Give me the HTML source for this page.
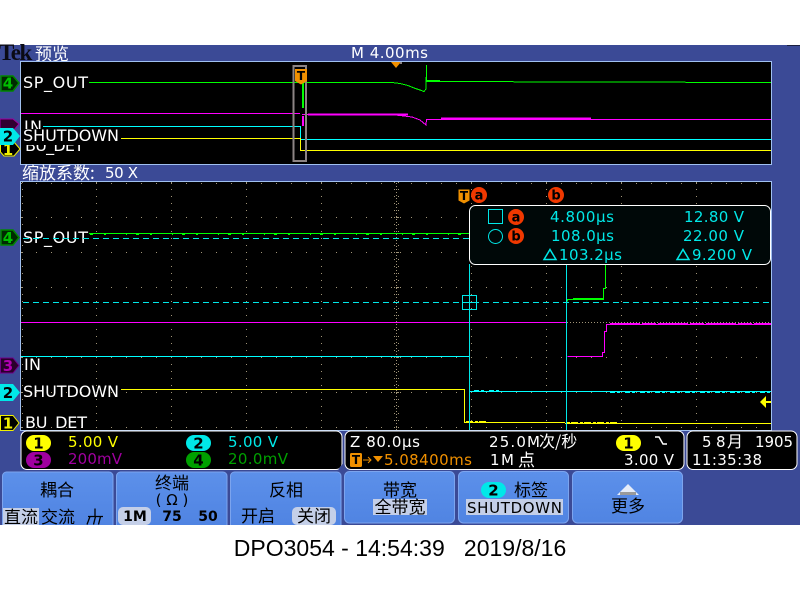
<!DOCTYPE html>
<html lang="zh">
<head>
<meta charset="utf-8">
<title>DPO3054</title>
<style>
html,body{margin:0;padding:0;background:#fff;width:800px;height:600px;overflow:hidden}
svg{display:block}
text{font-family:"DejaVu Sans","Liberation Sans","Noto Sans CJK SC",sans-serif;font-size:15px}
.cjk{font-family:"Noto Sans CJK SC","WenQuanYi Zen Hei",sans-serif}
.lb{fill:#fff;font-size:16px}
.cy{fill:#00e8e8;font-size:15px}
.w{fill:#fff;font-size:15px}
.k{fill:#000;font-size:15px}
.kc{fill:#000;font-family:"Noto Sans CJK SC","WenQuanYi Zen Hei",sans-serif;text-anchor:middle}
.tag{font-size:15px;font-weight:bold;text-anchor:middle}
.crisp,.crisp *{shape-rendering:crispEdges}
</style>
</head>
<body>
<svg xmlns="http://www.w3.org/2000/svg" width="800" height="600" viewBox="0 0 800 600">
<defs>
<linearGradient id="btn" x1="0" y1="0" x2="0" y2="1"><stop offset="0" stop-color="#5c90ea"/><stop offset="1" stop-color="#5084e2"/></linearGradient>
<clipPath id="ov"><rect x="21" y="62" width="750" height="102"/></clipPath>
</defs>

<!-- background -->
<rect width="800" height="600" fill="#fff"/>
<rect x="0" y="45" width="800" height="480" fill="#3b4a96"/>
<rect x="787" y="45" width="13" height="1" fill="#1a1f40"/>

<!-- header -->
<text x="-1" y="60" style="font-family:'Liberation Serif',serif;font-size:23px;font-weight:bold;fill:#0a0a14;letter-spacing:-1.5px">Tek</text>
<text x="35" y="60" class="cjk" style="font-size:17px;fill:#fff">预览</text>
<text x="351" y="58" class="w" textLength="77" lengthAdjust="spacing">M 4.00ms</text>

<!-- overview box -->
<rect class="crisp" x="20.5" y="61.5" width="751" height="103" fill="#000" stroke="#a0c0f0"/>
<g class="crisp" clip-path="url(#ov)" fill="none" stroke-width="1">
<polyline stroke="#00ff00" points="89,82.5 392,82.5 400,83.5 408,85.5 414,88 420,90 424,91.5 426,89 426.5,65 426.5,81.5 771,82.5"/>
<path stroke="#00ff00" stroke-width="2" d="M427 81h13M303 83v25"/>
<polyline stroke="#ff00ff" points="21,113.5 300,113.5"/>
<polyline stroke="#ff00ff" points="302,114.5 390,114.5 400,115.5 412,117 420,120 426,125 426.5,119.5 771,119.5"/>
<path stroke="#ff00ff" stroke-width="2" d="M303 116v10M308 114.5h100M441 118.5h150"/>
<polyline stroke="#00ffff" points="43,126.5 300.5,126.5 300.5,139.5 771,139.5"/>
<polyline stroke="#ffff00" points="121,138.5 300.5,138.5 300.5,150.5 771,150.5"/>
</g>
<path class="crisp" d="M306 84V66H293.500V161H306V84" fill="none" stroke="#8c8484" stroke-width="2"/>
<path d="M295 69h12v12l-6 3.500l-6-3.500z" fill="#f09000"/>
<text x="301" y="80" style="font-size:12px;font-weight:bold;fill:#000;text-anchor:middle">T</text>
<path d="M391 62h10l-5 6z" fill="#f09000"/>
<rect x="400" y="62" width="2" height="2" fill="#8c8484"/>

<!-- overview labels -->
<text x="23" y="88" class="lb" textLength="65" lengthAdjust="spacing">SP_OUT</text>
<text x="24" y="132" class="lb" textLength="18" lengthAdjust="spacing">IN</text>
<text x="25" y="151" class="lb" textLength="59" lengthAdjust="spacing">BU_DET</text>
<rect x="22" y="129" width="98" height="16" fill="#000"/>
<text x="23" y="141" class="lb" textLength="96" lengthAdjust="spacing">SHUTDOWN</text>

<path d="M0 119H13L19 124L13 131H0Z" fill="#300030" stroke="#a000a0"/>
<path d="M0.500 142H14L20 149L14 156H4L0.500 152Z" fill="#000" stroke="#f0f000"/>
<text x="8" y="155" class="tag" style="fill:#f0f000">1</text>
<path d="M0 128H13L20 136L13 145H0Z" fill="#00e8e8"/>
<text x="8" y="141.500" class="tag" style="fill:#000">2</text>
<path d="M1 76H13L19 83L13 91H1Z" fill="#002a00" stroke="#008800" stroke-width="1.500"/>
<text x="8" y="88.500" class="tag" style="fill:#00c000">4</text>

<text x="22" y="179" class="cjk" style="font-size:17px;fill:#fff">缩放系数:</text>
<text x="105" y="178" class="w" textLength="33" lengthAdjust="spacing">50 X</text>

<!-- main graticule -->
<rect class="crisp" x="20.500" y="181.500" width="751" height="249" fill="#000" stroke="#a0c0f0"/>
<g class="crisp" stroke="#a09478" fill="none">
<path stroke-dasharray="1 14" d="M21 183.500H771M21 217.500H771M21 252.500H771M21 287.500H771M21 357.500H771M21 392.500H771M21 427.500H771"/>
<path stroke-dasharray="1 6" d="M22.500 182V430M96.500 182V430M171.500 182V430M246.500 182V430M321.500 182V430M471.500 182V430M546.500 182V430M621.500 182V430M696.500 182V430"/>
<path stroke-dasharray="1 2" d="M396.500 183V430M21 322.500H771"/>
<path stroke-dasharray="1 6" d="M394.500 182V430M398.500 182V430"/>
<path stroke-dasharray="1 2" d="M391 217.500h11M391 252.500h11M391 287.500h11M391 357.500h11M391 392.500h11"/>
</g>

<!-- main traces -->
<g class="crisp" fill="none" stroke-width="1">
<path stroke="#00e8e8" stroke-dasharray="6 4" d="M23 238.500H469M23 302.500H771"/>
<path stroke="#00ff00" d="M89 233.500H470"/>
<path stroke="#00ff00" stroke-dasharray="3 11 2 20 1 9" d="M90 234.500H470"/>
<path stroke="#ff00ff" d="M21 322.500H566"/>
<path stroke="#00ffff" d="M21 356.500H469.500M470 391.500H771"/>
<path stroke="#ffff00" d="M121 389.500H464.500V422.500H565M565 423.500H771"/>
<path stroke="#ffff00" stroke-dasharray="7 2 3 1" d="M466 421.500H488M545 422.500H617"/>
<path stroke="#00ffff" stroke-dasharray="5 2 3 5" d="M474 390.500H500M610 392.500H771"/>
<path stroke="#00e8e8" d="M469.500 264V430M566.500 264V430"/>
<rect x="462.500" y="295.500" width="14" height="14" stroke="#00e8e8"/>
<path stroke="#00e8e8" d="M462 302.500h15"/>
<polyline stroke="#00ff00" points="567.500,301.500 567.500,299.500 603.500,299.500 603.500,288.500 605.500,288.500 605.500,264"/>
<path stroke="#00ff00" d="M573 298.500h30"/>
<polyline stroke="#ff00ff" points="567.500,356.500 602.500,356.500 602.500,352.500 604.500,352.500 604.500,331.500 606.500,331.500 606.500,324.500 610,324.500 771,324.500"/>
<path stroke="#ff00ff" d="M610 323.500H771" stroke-dasharray="30 2 14 2"/>
</g>
<path d="M760 402L766 396V408Z" fill="#ffff00"/>
<rect x="764" y="401" width="7" height="2" fill="#ffff00"/>

<!-- main labels -->
<rect x="22" y="228" width="66" height="15" fill="#000"/>
<text x="23" y="243" class="lb" textLength="65" lengthAdjust="spacing">SP_OUT</text>
<path class="crisp" stroke="#00e8e8" stroke-dasharray="6 4" d="M23 238.500H88"/>
<text x="24" y="370" class="lb" textLength="17" lengthAdjust="spacing">IN</text>
<text x="23" y="397" class="lb" textLength="96" lengthAdjust="spacing">SHUTDOWN</text>
<text x="25" y="428" class="lb" textLength="62" lengthAdjust="spacing">BU_DET</text>

<path d="M1 230H13L19 237.500L13 245H1Z" fill="#002a00" stroke="#008800" stroke-width="1.500"/>
<text x="8" y="243" class="tag" style="fill:#00c000">4</text>
<path d="M0.500 358H13L19 365.500L13 373H0.500Z" fill="#2a002a" stroke="#70008a"/>
<text x="8" y="371" class="tag" style="fill:#b000b0">3</text>
<path d="M0 384H13L20 392.500L13 401H0Z" fill="#00e8e8"/>
<text x="8" y="398" class="tag" style="fill:#000">2</text>
<path d="M0.500 415.500H13L19 423L13 430.500H0.500Z" fill="#000" stroke="#f0f000"/>
<text x="8" y="428.500" class="tag" style="fill:#f0f000">1</text>

<!-- cursor markers -->
<path d="M458.500 189.500h11v11l-5.500 3l-5.500-3z" fill="#f09000"/>
<text x="464" y="200" style="font-size:12px;font-weight:bold;fill:#000;text-anchor:middle">T</text>
<circle cx="479" cy="195" r="8" fill="#f03800"/>
<text x="479" y="199.500" style="font-size:13px;font-weight:bold;fill:#000;text-anchor:middle">a</text>
<circle cx="556" cy="195" r="8" fill="#f03800"/>
<text x="556" y="199.500" style="font-size:13px;font-weight:bold;fill:#000;text-anchor:middle">b</text>

<!-- readout -->
<rect x="469.500" y="205.500" width="301" height="59" rx="6" fill="#000808" stroke="#fff"/>
<rect class="crisp" x="488.500" y="209.500" width="14" height="14" fill="none" stroke="#00e8e8"/>
<circle cx="495.500" cy="236.500" r="7" fill="none" stroke="#00e8e8"/>
<circle cx="516" cy="217" r="8" fill="#f03800"/>
<text x="516" y="221.500" style="font-size:13px;font-weight:bold;fill:#000;text-anchor:middle">a</text>
<circle cx="516" cy="236" r="8" fill="#f03800"/>
<text x="516" y="240.500" style="font-size:13px;font-weight:bold;fill:#000;text-anchor:middle">b</text>
<text x="550" y="222" class="cy" textLength="64" lengthAdjust="spacing">4.800µs</text>
<text x="684" y="222" class="cy" textLength="60" lengthAdjust="spacing">12.80 V</text>
<text x="551" y="241" class="cy" textLength="63" lengthAdjust="spacing">108.0µs</text>
<text x="683" y="241" class="cy" textLength="61" lengthAdjust="spacing">22.00 V</text>
<path d="M544 259.500l6-10l6 10z" fill="none" stroke="#00e8e8" stroke-width="1.500"/>
<text x="559" y="260" class="cy" textLength="63" lengthAdjust="spacing">103.2µs</text>
<path d="M677 259.500l6-10l6 10z" fill="none" stroke="#00e8e8" stroke-width="1.500"/>
<text x="692" y="260" class="cy" textLength="60" lengthAdjust="spacing">9.200 V</text>

<!-- status panels -->
<rect x="21" y="431" width="321" height="38.500" rx="6" fill="#000" stroke="#fff"/>
<rect x="345" y="431" width="339" height="38.500" rx="6" fill="#000" stroke="#fff"/>
<rect x="687" y="431" width="110" height="38.500" rx="6" fill="#000" stroke="#fff"/>

<rect x="26" y="435" width="25" height="16" rx="8" fill="#ffff00"/>
<text x="38.500" y="448.500" class="tag" style="fill:#000">1</text>
<rect x="186" y="435" width="25" height="16" rx="8" fill="#00e8e8"/>
<text x="198.500" y="448.500" class="tag" style="fill:#000">2</text>
<rect x="26" y="452" width="25" height="16" rx="8" fill="#a000a0"/>
<text x="38.500" y="465.500" class="tag" style="fill:#000">3</text>
<rect x="186" y="452" width="25" height="16" rx="8" fill="#00a000"/>
<text x="198.500" y="465.500" class="tag" style="fill:#000">4</text>
<text x="68" y="447" style="fill:#ffff00" textLength="50" lengthAdjust="spacing">5.00 V</text>
<text x="228" y="447" style="fill:#00e8e8" textLength="50" lengthAdjust="spacing">5.00 V</text>
<text x="68" y="464" style="fill:#a000a0" textLength="54" lengthAdjust="spacing">200mV</text>
<text x="228" y="464" style="fill:#00a000" textLength="60" lengthAdjust="spacing">20.0mV</text>

<text x="350" y="447" class="w" textLength="70" lengthAdjust="spacing">Z 80.0µs</text>
<text x="489" y="447" class="w" textLength="51" lengthAdjust="spacing">25.0M</text>
<text x="539" y="447" class="cjk" style="fill:#fff;font-size:16px">次/秒</text>
<rect x="616" y="435" width="25" height="16" rx="8" fill="#ffff00"/>
<text x="628.500" y="448.500" class="tag" style="fill:#000">1</text>
<path d="M655 437h4l4 7h4" fill="none" stroke="#fff" stroke-width="1.500"/>
<rect x="350" y="453" width="12" height="14" rx="1.500" fill="#f09000"/>
<text x="356" y="464" style="font-size:12px;font-weight:bold;fill:#000;text-anchor:middle">T</text>
<path d="M363 460h8M368 457l3 3l-3 3" fill="none" stroke="#f09000"/>
<path d="M373 456h10l-5 6z" fill="#f09000"/>
<text x="384" y="465" style="fill:#f09000" textLength="88" lengthAdjust="spacing">5.08400ms</text>
<text x="490" y="465" class="w" textLength="24" lengthAdjust="spacing">1M</text>
<text x="518" y="466" class="cjk" style="fill:#fff;font-size:17px">点</text>
<text x="624" y="465" class="w" textLength="50" lengthAdjust="spacing">3.00 V</text>
<text x="702" y="447" class="w">5</text>
<text x="716" y="447" class="w">8</text>
<text x="727" y="447" class="cjk" style="fill:#fff;font-size:16px">月</text>
<text x="755" y="447" class="w" textLength="38" lengthAdjust="spacing">1905</text>
<text x="692" y="465" class="w" textLength="70" lengthAdjust="spacing">11:35:38</text>
<path d="M342.500 464l4 5l-4 5l-4-5z" fill="#3b4a96"/>

<!-- buttons -->
<g fill="url(#btn)" stroke="#7ca4ee" stroke-width="1">
<path d="M2.500 525V476a4 4 0 0 1 4-4H109a4 4 0 0 1 4 4V525"/>
<path d="M116.500 525V476a4 4 0 0 1 4-4H223a4 4 0 0 1 4 4V525"/>
<path d="M230.500 525V476a4 4 0 0 1 4-4H337a4 4 0 0 1 4 4V525"/>
<rect x="344.500" y="471.500" width="110" height="51.500" rx="5"/>
<rect x="458.500" y="471.500" width="110" height="51.500" rx="5"/>
<rect x="572.500" y="471.500" width="110" height="51.500" rx="5"/>
</g>
<g fill="#c4cfe8">
<rect x="3" y="508" width="36" height="17"/>
<rect x="118" y="507" width="33" height="18" rx="5"/>
<rect x="292" y="507" width="44" height="18" rx="5"/>
<rect x="373" y="499" width="54" height="16"/>
<rect x="466" y="499" width="97" height="16"/>
</g>
<text x="57" y="496" class="kc" style="font-size:17px">耦合</text>
<text x="21" y="523" class="kc" style="font-size:17px">直流</text>
<text x="58" y="523" class="kc" style="font-size:17px">交流</text>
<path d="M95 508.500v8M88 516.500h15M90 516.500l-3 8M95.500 516.500l-2 8M100.500 516.500l-2 8" fill="none" stroke="#000" stroke-width="1.300"/>
<text x="172" y="489" class="kc" style="font-size:17px">终端</text>
<text x="172" y="505" style="font-size:15px;fill:#000;text-anchor:middle">( Ω )</text>
<text x="135" y="521" style="font-size:14px;font-weight:bold;fill:#000;text-anchor:middle">1M</text>
<text x="172" y="521" style="font-size:14px;font-weight:bold;fill:#000;text-anchor:middle">75</text>
<text x="208" y="521" style="font-size:14px;font-weight:bold;fill:#000;text-anchor:middle">50</text>
<text x="286" y="496" class="kc" style="font-size:17px">反相</text>
<text x="258" y="522" class="kc" style="font-size:17px">开启</text>
<text x="314" y="522" class="kc" style="font-size:17px">关闭</text>
<text x="400" y="496" class="kc" style="font-size:17px">带宽</text>
<text x="400" y="513" class="kc" style="font-size:17px">全带宽</text>
<rect x="481" y="482" width="25" height="16" rx="8" fill="#00e8e8"/>
<text x="493.500" y="495.500" class="tag" style="fill:#000">2</text>
<text x="531" y="496" class="kc" style="font-size:17px">标签</text>
<text x="467" y="513" class="k" textLength="95" lengthAdjust="spacing">SHUTDOWN</text>
<path d="M617 495L628 484L639 495Z" fill="#e6ecf8"/>
<rect x="620" y="492" width="16" height="3" fill="#9a9a9a"/>
<text x="628" y="512" class="kc" style="font-size:17px">更多</text>

<!-- footer -->
<text x="400" y="556" style="font-family:'Liberation Sans',sans-serif;font-size:23px;fill:#000;text-anchor:middle;white-space:pre" xml:space="preserve">DPO3054 - 14:54:39   2019/8/16</text>
</svg>
</body>
</html>
